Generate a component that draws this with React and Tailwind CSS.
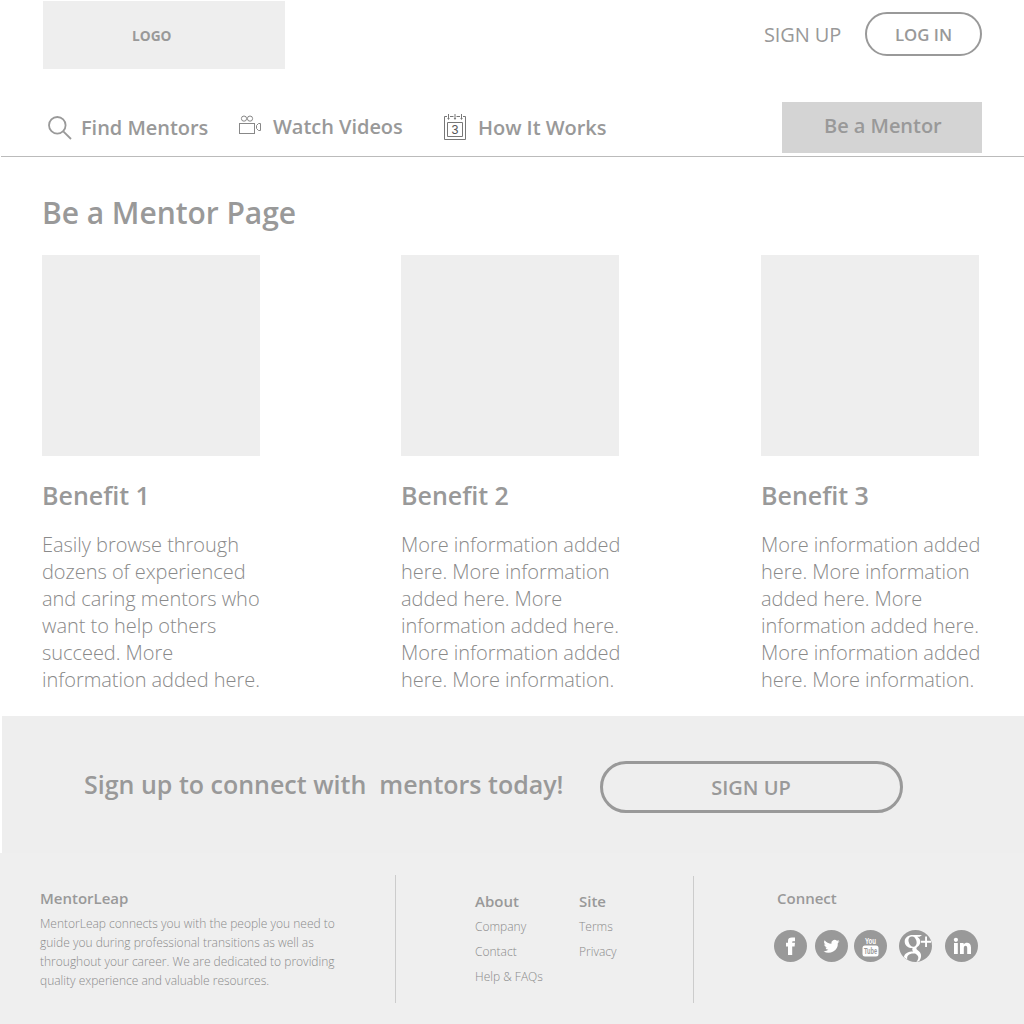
const benefits = [
  { title: 'Benefit 1', cls: 'w-[359px]', lines: ['Easily browse through', 'dozens of experienced', 'and caring mentors who', 'want to help others', 'succeed. More', 'information added here.'] },
  { title: 'Benefit 2', cls: 'w-[360px]', lines: ['More information added', 'here. More information', 'added here. More', 'information added here.', 'More information added', 'here. More information.'] },
  { title: 'Benefit 3', cls: 'w-[263px]', lines: ['More information added', 'here. More information', 'added here. More', 'information added here.', 'More information added', 'here. More information.'] },
];

const about = [
  'MentorLeap connects you with the people you need to',
  'guide you during professional transitions as well as',
  'throughout your career. We are dedicated to providing',
  'quality experience and valuable resources.',
];

function SearchIcon() {
  return (
    <svg className="ml-[48px] mt-[3px] h-[24px] w-[24px] shrink-0" viewBox="0 0 24 24" fill="none" stroke="#999" strokeWidth="1.8">
      <circle cx="9.3" cy="9.3" r="8.3" />
      <path d="M15.3 15.3L23 23" />
    </svg>
  );
}

function CameraIcon() {
  return (
    <svg className="ml-[31px] mt-[3px] h-[20px] w-[23px] shrink-0" viewBox="0 0 23 20" fill="none" stroke="#888" strokeWidth="1">
      <circle cx="5" cy="3.6" r="2.6" />
      <circle cx="11" cy="3.6" r="2.6" />
      <rect x="0.5" y="8.5" width="15" height="10" />
      <path d="M17.5 10.5L19.5 8.5H21.5V15.5H19.5L17.5 13.5Z" />
    </svg>
  );
}

function CalendarIcon() {
  return (
    <svg className="ml-[41px] mt-[1px] h-[27px] w-[22px] shrink-0" viewBox="0 0 22 27" fill="none" stroke="#777" strokeWidth="1">
      <path d="M3 2.5H0.5V25.5H21.5V2.5H19M6 2.5H9.5M12.5 2.5H16" />
      <path d="M3.5 8.5H18.5V22.5H3.5Z" />
      <path d="M4.5 0V5M11 0V5M17.5 0V5" />
      <path d="M3.2 4H5.8L4.5 6ZM9.7 4H12.3L11 6ZM16.2 4H18.8L17.5 6Z" fill="#777" stroke="none" />
      <text x="11" y="20" textAnchor="middle" fontFamily="Liberation Sans" fontSize="12.5" fontWeight="400" fill="#555" stroke="none">3</text>
    </svg>
  );
}

function Disc({ className, children }) {
  return (
    <svg className={className} viewBox="0 0 33 32" fill="#fff">
      <ellipse cx="16.5" cy="16" rx="16.5" ry="16" fill="#999" />
      {children}
    </svg>
  );
}

export default function App() {
  return (
    <div className="h-[1024px] w-[1024px] overflow-hidden bg-white font-['Open_Sans',sans-serif] whitespace-pre text-[#999]">
      <header>
        <div className="flex h-[102px] items-start">
          <div className="mt-[1px] ml-[43px] h-[68px] w-[242px] bg-[#eee] pl-[89px] text-[13.7px] leading-[69px] font-bold">LOGO</div>
          <a className="mt-[20px] ml-[479px] w-[101px] text-[20px] leading-[30px] tracking-[-0.1px]">SIGN UP</a>
          <button className="mt-[12px] h-[44px] w-[117px] rounded-full border-2 border-[#999] text-center text-[16.8px] leading-[41px] font-semibold">LOG IN</button>
        </div>
        <nav className="ml-[1px] flex h-[55px] items-start border-b border-[#bbb] text-[20px] leading-[30px] font-semibold tracking-[-0.04px]">
          <div className="-ml-[1px] flex pt-[11px]"><SearchIcon /><span className="ml-[9px] w-[127px]">Find Mentors</span></div>
          <div className="flex pt-[10px]"><CameraIcon /><span className="ml-[11px] w-[130px]">Watch Videos</span></div>
          <div className="flex pt-[11px]"><CalendarIcon /><span className="ml-[12px] w-[304px]">How It Works</span></div>
          <a className="h-[51px] w-[200px] bg-[#d4d4d4] pl-[42px] leading-[47px]">Be a Mentor</a>
        </nav>
      </header>
      <main className="h-[559px] pl-[42px]">
        <h1 className="pt-[33px] text-[30px] leading-[46px] font-semibold tracking-[-0.04px]">Be a Mentor Page</h1>
        <section className="flex pt-[19px]">
          {benefits.map((b) => (
            <article key={b.title} className={b.cls + ' shrink-0'}>
              <div className="h-[201px] w-[218px] bg-[#eee]" />
              <h2 className="mt-[19px] text-[25px] leading-[40px] font-semibold">{b.title}</h2>
              <div className="mt-[16px] text-[20px] leading-[27px] font-light tracking-[-0.04px] text-[#8a8a8a]">
                {b.lines.map((l) => <p key={l}>{l}</p>)}
              </div>
            </article>
          ))}
        </section>
      </main>
      <section className="ml-[2px] flex h-[137px] items-start bg-[#eee]">
        <h2 className="mt-[48px] ml-[82px] w-[516px] text-[25px] leading-[40px] font-semibold">Sign up to connect with  mentors today!</h2>
        <button className="mt-[45px] h-[52px] w-[303px] rounded-full border-[3px] border-[#999] pr-[1px] text-center text-[20px] leading-[47px] font-semibold">SIGN UP</button>
      </section>
      <footer className="flex h-[171px] bg-[#efefef] text-[12px] font-light">
        <div className="mt-[22px] h-[128px] w-[396px] border-r border-[#ccc] pt-[12px] pl-[40px]">
          <h3 className="text-[15px] leading-[22px] font-semibold">MentorLeap</h3>
          <div className="mt-[5px] leading-[19px] text-[#8a8a8a]">{about.map((l) => <p key={l}>{l}</p>)}</div>
        </div>
        <div className="mt-[23px] flex h-[127px] w-[298px] border-r border-[#ccc] pt-[14px] pl-[79px]">
          <div className="w-[104px]">
            <h3 className="text-[15px] leading-[22px] font-semibold">About</h3>
            <div className="mt-[2px] leading-[25px] text-[#8a8a8a]"><p>Company</p><p>Contact</p><p>Help &amp; FAQs</p></div>
          </div>
          <div>
            <h3 className="text-[15px] leading-[22px] font-semibold">Site</h3>
            <div className="mt-[2px] leading-[25px] text-[#8a8a8a]"><p>Terms</p><p>Privacy</p></div>
          </div>
        </div>
        <div className="pt-[34px] pl-[80px]">
          <h3 className="pl-[3px] text-[15px] leading-[22px] font-semibold">Connect</h3>
          <div className="mt-[21px] flex">
            <Disc className="h-[32px] w-[33px]"><path d="M14 25V16.5H12V12.7H14V11C14 8.4 15.3 7.5 18 7.5H21V11.3H19.3C18.5 11.3 18.2 11.6 18.2 12.3V12.7H21L20.6 16.5H18.2V25Z" /></Disc>
            <Disc className="ml-[7.5px] h-[32px] w-[33px]"><path transform="translate(8.7 8.2) scale(.67)" d="M23.6 4.6a9.6 9.6 0 0 1-2.8.8 4.9 4.9 0 0 0 2.1-2.7 9.8 9.8 0 0 1-3.1 1.2 4.9 4.9 0 0 0-8.3 4.5A13.9 13.9 0 0 1 1.4 3.2a4.9 4.9 0 0 0 1.5 6.5 4.9 4.9 0 0 1-2.2-.6 4.9 4.9 0 0 0 3.9 4.8 4.9 4.9 0 0 1-2.2.1 4.9 4.9 0 0 0 4.6 3.4A9.8 9.8 0 0 1-.3 19.5 13.9 13.9 0 0 0 21.1 7.1a9.9 9.9 0 0 0 2.5-2.5Z" /></Disc>
            <Disc className="ml-[6px] h-[32px] w-[33px]">
              <g fontFamily="Liberation Sans" fontWeight="bold" textAnchor="middle">
                <text transform="translate(16.5 14) scale(.65 1)" fontSize="9.5">You</text>
                <rect x="8.5" y="15.5" width="16" height="11" rx="2.5" />
                <text transform="translate(16.5 24.3) scale(.65 1)" fontSize="8.7" fill="#999">Tube</text>
              </g>
            </Disc>
            <Disc className="ml-[12.5px] h-[32px] w-[33px]">
              <path fillRule="evenodd" d="M13.5 5H23L20.6 6.8H18.2C23 10 21.6 14.5 18.8 16.6C16.7 18.2 17 19 19 20.6C22.5 23 23.3 27 20.2 31L17.5 32C20.5 28 19.8 25.7 16 23.6C10 23.1 7.5 25.8 8.3 29.5L5 27.2C5 23.5 9.5 21.5 14.2 21.5C13.2 20.3 13 19.4 13.6 18C8.5 18.3 5.7 15.1 5.7 11.5C5.7 7.5 9.5 5 13.5 5ZM12.8 6.4C9.7 6.6 9 9.3 9.8 12.3C10.6 15.4 12.6 17 14.8 16.7C17.2 16.4 18.2 13.7 17.3 10.6C16.5 7.8 14.9 6.2 12.8 6.4Z" />
              <path d="M22 10.8H26.1V6.5H28V10.8H32V12.7H28V17H26.1V12.7H22Z" />
            </Disc>
            <Disc className="ml-[13px] h-[32px] w-[33px]">
              <path d="M9 13H12.8V24H9ZM15 13H18.6V14.5C20.5 11.8 26 12 26 17.5V24H22.2V18C22.2 14.8 18.8 15 18.8 18V24H15Z" />
              <circle cx="10.9" cy="9.8" r="2.1" />
            </Disc>
          </div>
        </div>
      </footer>
    </div>
  );
}
